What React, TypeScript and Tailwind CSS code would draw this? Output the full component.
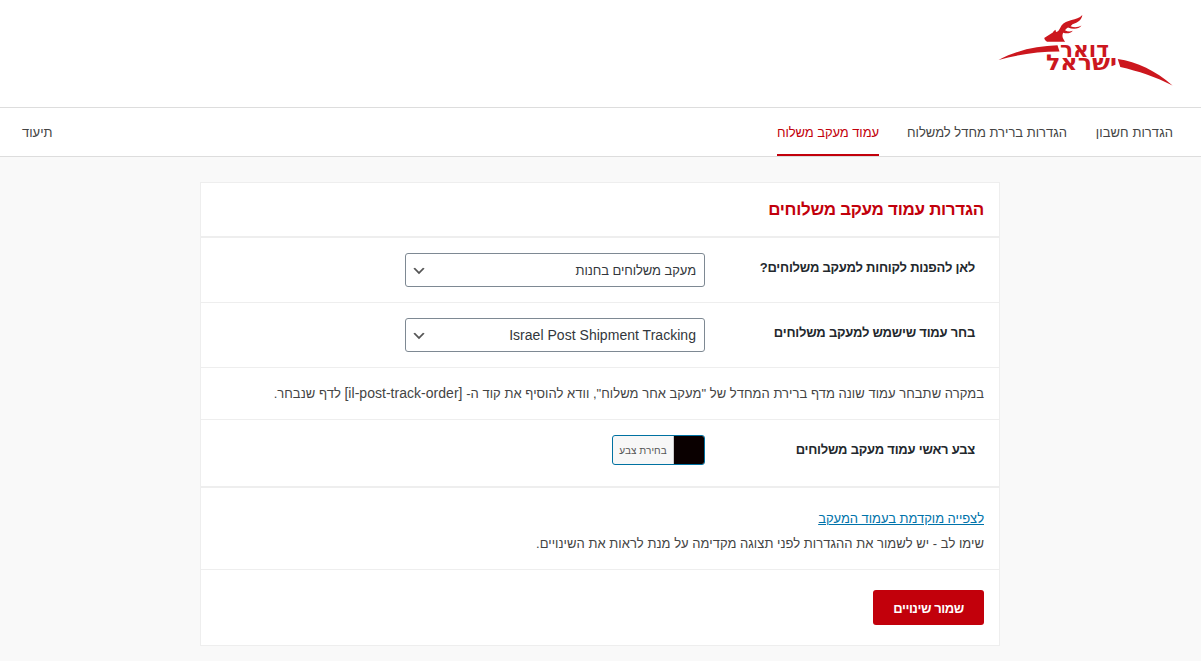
import type { ReactNode } from 'react';

function Logo() {
  return (
    <svg width="176" height="74" viewBox="0 0 176 74" fill="#cc171e" direction="rtl" role="img">
      <path d="M0.500 47 C20 36.500 40 33 59.500 32.300 L61.500 38.500 C40 38.500 20 41.500 0.500 47 Z" />
      <path d="M119.700 46 C139 48.500 158 58 174.500 72.500 C158 64 140 58 122.300 54 Z" />
      <path d="M46.200 25 L54.800 19.600 Q55.500 17.500 57.500 16.700 L58 19 C61 18.500 62 15 63.500 12.500 C68 6 79 8 84.300 2 C84 6.500 80 9.500 74.500 11.200 L72.500 13.200 C76 14.700 80 14.500 83.500 12.500 C81 16.200 75 16.500 70 14.500 Q68 15.500 67 17.200 C69.500 18.600 72 18.800 74.800 17.700 C72.500 20.700 68.500 20.800 65.200 19.800 C63.500 23 65 26 67.200 28.800 H49 Q46.500 27.500 46.200 25 Z" />
      <text x="111" y="43.500" textLength="49" lengthAdjust="spacingAndGlyphs" fontFamily="DejaVu Sans" fontWeight="700" fontSize="21.500">דואר</text>
      <text x="119" y="56.800" textLength="71" lengthAdjust="spacingAndGlyphs" fontFamily="DejaVu Sans" fontWeight="700" fontSize="21.500">ישראל</text>
    </svg>
  );
}

function Select({ children }: { children: ReactNode }) {
  return (
    <button className="flex h-[34px] w-[300px] items-center justify-between rounded-[3px] border border-[#7e8993] bg-white pr-[8px] pl-[5px] text-[#32373c]">
      {children}
      <svg className="mt-[2px]" width="16" height="16" viewBox="0 0 20 20" fill="#555">
        <path d="M5 6l5 5 5-5 2 1-7 7-7-7 2-1z" />
      </svg>
    </button>
  );
}

function Label({ children }: { children: ReactNode }) {
  return <div className="w-[270px] pt-[6px] pr-[9px] leading-[18px] font-bold tracking-[-0.23px] text-[#23282d]">{children}</div>;
}

export default function App() {
  return (
    <div dir="rtl" className="flex h-[661px] w-[1201px] flex-col overflow-hidden bg-[#f9f9f9] font-['Liberation_Sans',sans-serif] text-[13px] text-[#444]">
      <header className="flex h-[108px] shrink-0 items-start border-b border-[#ddd] bg-white pt-[13px] pr-[27px]">
        <Logo />
      </header>
      <nav className="flex h-[49px] shrink-0 gap-[28px] border-b border-[#ddd] bg-white pr-[28px] pl-[22px] leading-[49px] whitespace-nowrap">
        <a className="h-[48px] w-[78px] tracking-[0.06px]">הגדרות חשבון</a>
        <a className="h-[48px] w-[160px]">הגדרות ברירת מחדל למשלוח</a>
        <a className="h-[48px] w-[102px] border-b-2 border-[#c2000b] tracking-[-0.08px] text-[#c2000b]">עמוד מעקב משלוח</a>
        <a className="mr-auto h-[48px]">תיעוד</a>
      </nav>
      <main className="mt-[25px] mr-[201px] w-[800px] border border-[#eee] bg-white whitespace-nowrap">
        <h1 className="h-[55px] border-b-2 border-[#eee] pr-[15px] text-[17px] leading-[53px] font-bold tracking-[-0.3px] text-[#c2000b]">הגדרות עמוד מעקב משלוחים</h1>
        <div className="flex h-[65px] gap-[9px] border-b border-[#eee] pt-[15px] pr-[15px]">
          <Label>לאן להפנות לקוחות למעקב משלוחים?</Label>
          <Select><span className="pt-[2px] tracking-[-0.08px]">מעקב משלוחים בחנות</span></Select>
        </div>
        <div className="flex h-[65px] gap-[9px] border-b border-[#eee] pt-[15px] pr-[15px]">
          <Label>בחר עמוד שישמש למעקב משלוחים</Label>
          <Select><span className="text-[14px] tracking-[0.03px]">Israel Post Shipment Tracking</span></Select>
        </div>
        <p className="h-[52px] border-b border-[#eee] pr-[15px] leading-[51px] tracking-[0.03px]">
          במקרה שתבחר עמוד שונה מדף ברירת המחדל של "מעקב אחר משלוח", וודא להוסיף את קוד ה- <bdi className="text-[14px]">[il-post-track-order]</bdi> לדף שנבחר.
        </p>
        <div className="flex h-[68px] gap-[9px] border-b-2 border-[#eee] pt-[15px] pr-[15px]">
          <Label>צבע ראשי עמוד מעקב משלוחים</Label>
          <button className="flex h-[30px] w-[93px] overflow-hidden rounded-[3px] border border-[#0071a1] bg-[#f7f7f7] text-[10px] text-[#555]">
            <span className="h-full w-[31px] border-l border-[#ccc] bg-[#0a0000]" />
            <span className="flex-1 text-center leading-[29px] tracking-[0.05px]">בחירת צבע</span>
          </button>
        </div>
        <div className="h-[82px] border-b border-[#eee] pt-[18px] pr-[15px] leading-[25px]">
          <div><a className="tracking-[-0.04px] text-[#0073aa] underline">לצפייה מוקדמת בעמוד המעקב</a></div>
          <div className="tracking-[0.03px]">שימו לב - יש לשמור את ההגדרות לפני תצוגה מקדימה על מנת לראות את השינויים.</div>
        </div>
        <div className="h-[75px] pt-[20px] pr-[15px]">
          <button className="h-[35px] w-[111px] rounded-[3px] bg-[#c2000b] pt-[2px] font-bold tracking-[-0.45px] text-white">שמור שינויים</button>
        </div>
      </main>
    </div>
  );
}
